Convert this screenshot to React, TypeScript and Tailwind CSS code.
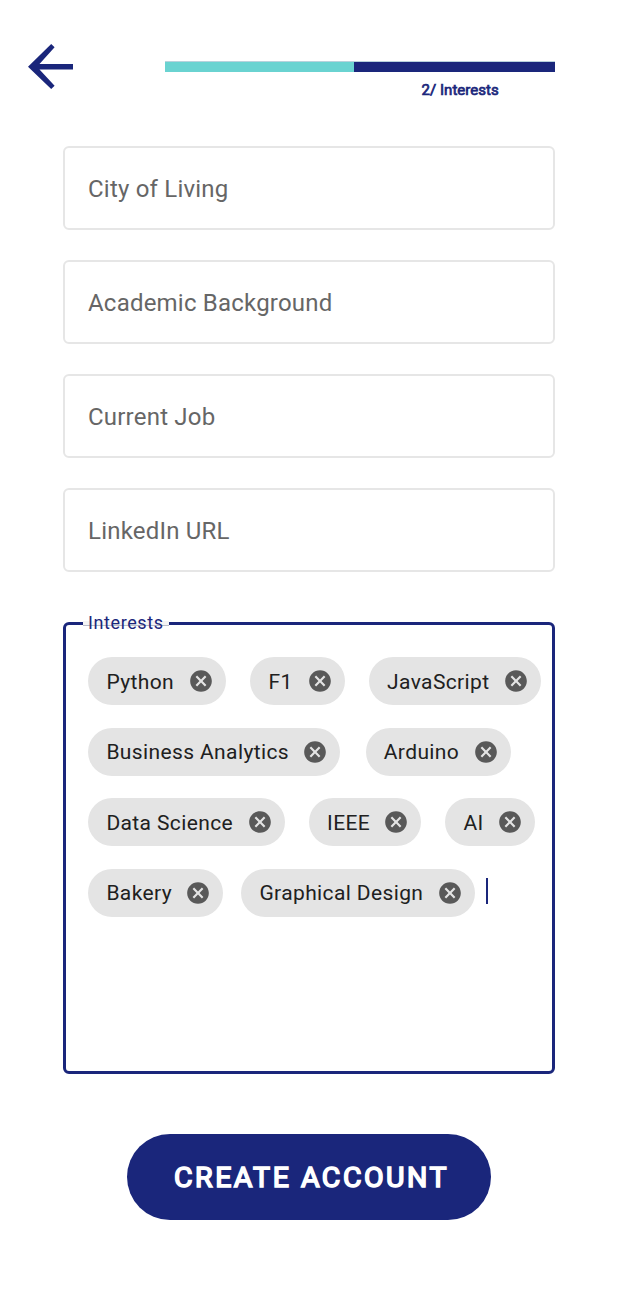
import React from "react";

function CloseIcon() {
  return (
    <svg className="h-[26px] w-[26px] shrink-0" viewBox="0 0 24 24" fill="#595959">
      <path d="M12 2C6.47 2 2 6.47 2 12s4.470 10 10 10 10-4.470 10-10S17.530 2 12 2zm5 13.590L15.590 17 12 13.410 8.410 17 7 15.590 10.590 12 7 8.410 8.410 7 12 10.590 15.590 7 17 8.410 13.410 12 17 15.590z" />
    </svg>
  );
}

function Chip({ label, box }: { label: string; box: string }) {
  return (
    <div className={`flex h-12 shrink-0 items-center justify-between rounded-full bg-[#e4e4e4] pr-[12.300px] pl-[18px] text-[21px] tracking-[0.38px] text-[#202020] ${box}`}>
      <span className="whitespace-nowrap pt-[3px]">{label}</span>
      <CloseIcon />
    </div>
  );
}

const fields = ["City of Living", "Academic Background", "Current Job", "LinkedIn URL"];

const chipRows = [
  [
    { label: "Python", box: "w-[138px]" },
    { label: "F1", box: "ml-[24px] w-[95px]" },
    { label: "JavaScript", box: "ml-[23.700px] w-[172.300px]" },
  ],
  [
    { label: "Business Analytics", box: "w-[252px]" },
    { label: "Arduino", box: "ml-[25.400px] w-[145.600px]" },
  ],
  [
    { label: "Data Science", box: "w-[197px]" },
    { label: "IEEE", box: "ml-[23.700px] w-[112.300px]" },
    { label: "AI", box: "ml-[24px] w-[90px]" },
  ],
  [
    { label: "Bakery", box: "w-[135px]" },
    { label: "Graphical Design", box: "ml-[18px] w-[234px]" },
  ],
];

export default function App() {
  return (
    <main className="h-[1305px] w-[618px] overflow-hidden bg-white font-[Roboto,sans-serif]">
      <header className="flex h-[145.500px] pt-[43px] pl-[27px]">
        <button aria-label="Back" className="h-[48px] w-[46px]">
          <svg className="h-[48px] w-[46px]" viewBox="0 0 46 48" fill="#1a267b">
            <path d="M24.200 1 27.600 4.200 12.500 20.900H46v5.700H12.500L27.600 42.700 24.200 46 1 23.700z" />
          </svg>
        </button>
        <div className="ml-[92px] w-[390px] pt-[18px]">
          <div className="flex h-[11px] border-t border-[#b8d2dc]">
            <div className="w-[189px] bg-[#6ad3d1]" />
            <div className="flex-1 bg-[#1a267b]" />
          </div>
          <p className="mt-[8px] ml-[256.500px] text-[15px] leading-5 tracking-[0.04px] text-[#1a267b] [-webkit-text-stroke:0.7px_#1a267b]">2/ Interests</p>
        </div>
      </header>
      <div className="ml-[63px] flex w-[492px] flex-col gap-[30px]">
        {fields.map((field) => (
          <div key={field} className="flex h-[84px] items-center rounded-md border-2 border-[#e6e6e6] pt-[2px] pl-[23px] text-[24px] tracking-[0.21px] text-[#666666]">
            {field}
          </div>
        ))}
      </div>
      <fieldset className="mt-[39.500px] ml-[63px] h-[463px] w-[492px] rounded-md border-[3px] border-[#1a267b] pl-[22.400px]">
        <legend className="-ml-[5.400px] bg-[linear-gradient(to_bottom,transparent_10px,#f4f4f4_10px,#f4f4f4_14px,#b9bcc8_14px,#b9bcc8_15px,transparent_15px)] pr-[5.500px] pl-[5px] text-[18px] leading-6 tracking-[0.6px] text-[#1a267b]">Interests</legend>
        <div className="flex flex-col gap-[22.500px] pt-[22px]">
          {chipRows.map((row, index) => (
            <div key={index} className="flex">
              {row.map((chip) => <Chip key={chip.label} {...chip} />)}
              {index === 3 && <span className="mt-[9px] ml-[11px] h-[26px] w-[1.500px] bg-[#1a267b]" />}
            </div>
          ))}
        </div>
      </fieldset>
      <button className="mt-[60px] ml-[127px] flex h-[86px] w-[364px] items-center justify-center rounded-full bg-[#1a267b] pt-[2px] pl-[5px] text-[28.500px] font-normal tracking-[2.500px] text-white [-webkit-text-stroke:1.600px_white]">
        CREATE ACCOUNT
      </button>
    </main>
  );
}
